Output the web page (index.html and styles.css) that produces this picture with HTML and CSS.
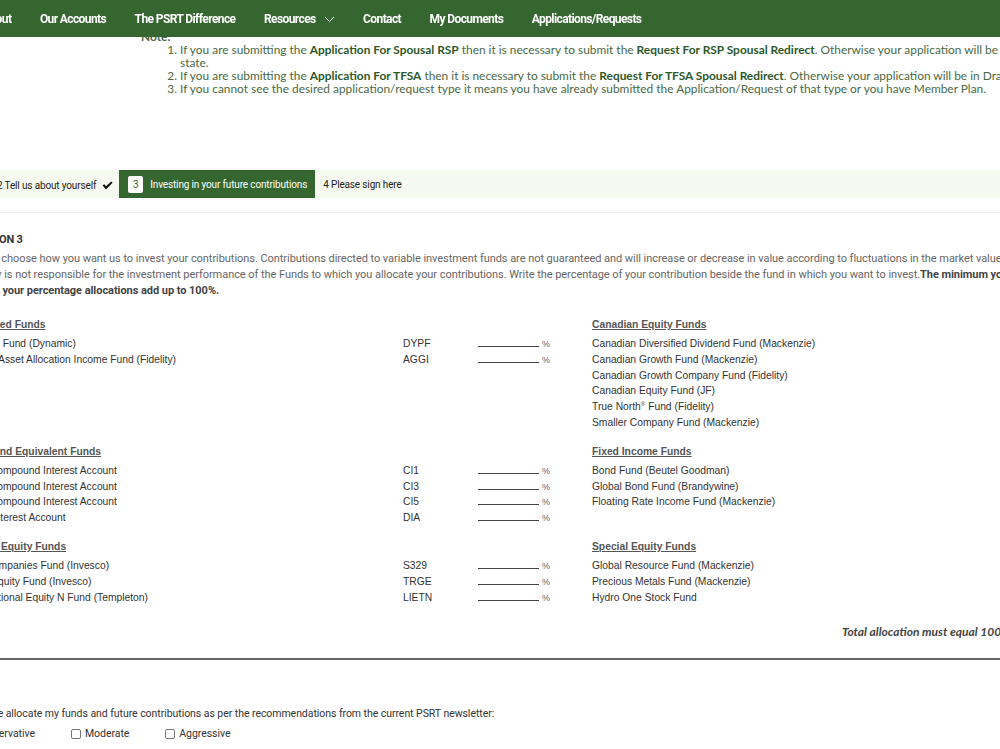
FILE: index.html
```html
<!DOCTYPE html>
<html lang="en">
<head>
<meta charset="utf-8">
<title>Applications/Requests – Investing in your future contributions</title>
<link rel="stylesheet" href="styles.css">
</head>
<body>
<header class="topnav">
  <nav class="topnav-inner">
    <a class="nav-link">About</a>
    <a class="nav-link">Our Accounts</a>
    <a class="nav-link">The PSRT Difference</a>
    <a class="nav-link has-menu">Resources
      <svg class="chev" width="11" height="7" viewBox="0 0 11 7"><polyline points="1,1 5.5,5.5 10,1" fill="none" stroke="#fff" stroke-width="1"/></svg>
    </a>
    <a class="nav-link">Contact</a>
    <a class="nav-link">My Documents</a>
    <a class="nav-link">Applications/Requests</a>
  </nav>
</header>

<main class="page">
  <section class="note">
    <div class="note-title">Note:</div>
    <ol class="note-list">
      <li>If you are submitting the <b>Application For Spousal RSP</b> then it is necessary to submit the <b>Request For RSP Spousal Redirect</b>. Otherwise your application will be in Draft<br>state.</li>
      <li>If you are submitting the <b>Application For TFSA</b> then it is necessary to submit the <b>Request For TFSA Spousal Redirect</b>. Otherwise your application will be in Draft state.</li>
      <li>If you cannot see the desired application/request type it means you have already submitted the Application/Request of that type or you have Member Plan.</li>
    </ol>
  </section>

  <div class="steps">
    <div class="step step-done">
      <span>2 Tell us about yourself</span>
      <svg class="check" width="11" height="9" viewBox="0 0 11 9"><path d="M0.6 4.6 L2.2 3.2 L4 5.2 L9.2 0.4 L10.6 1.8 L4 8.4 Z" fill="#111"/></svg>
    </div>
    <div class="step step-active">
      <span class="step-num">3</span>
      <span>Investing in your future contributions</span>
    </div>
    <div class="step step-next">4 Please sign here</div>
  </div>
  <div class="rule-light"></div>

  <section class="section3">
    <h2 class="sec-title">SECTION 3</h2>
    <p class="sec-intro">Please choose how you want us to invest your contributions. Contributions directed to variable investment funds are not guaranteed and will increase or decrease in value according to fluctuations in the market value of the assets. The<br>Society is not responsible for the investment performance of the Funds to which you allocate your contributions. Write the percentage of your contribution beside the fund in which you want to invest.<b>The minimum you can allocate to a fund is 5%.</b><br><b>Ensure your percentage allocations add up to 100%.</b></p>

    <div class="funds">
      <div class="fund-group">
        <div class="fund-head">Balanced Funds</div>
        <div class="fund-row"><span class="fund-name">Income Fund (Dynamic)</span><span class="fund-code">DYPF</span><span class="blank"></span><span class="pct">%</span></div>
        <div class="fund-row"><span class="fund-name">Global Asset Allocation Income Fund (Fidelity)</span><span class="fund-code">AGGI</span><span class="blank"></span><span class="pct">%</span></div>
      </div>
      <div class="fund-group">
        <div class="fund-head">Canadian Equity Funds</div>
        <div class="fund-row"><span class="fund-name">Canadian Diversified Dividend Fund (Mackenzie)</span></div>
        <div class="fund-row"><span class="fund-name">Canadian Growth Fund (Mackenzie)</span></div>
        <div class="fund-row"><span class="fund-name">Canadian Growth Company Fund (Fidelity)</span></div>
        <div class="fund-row"><span class="fund-name">Canadian Equity Fund (JF)</span></div>
        <div class="fund-row"><span class="fund-name">True North<sup>®</sup> Fund (Fidelity)</span></div>
        <div class="fund-row"><span class="fund-name">Smaller Company Fund (Mackenzie)</span></div>
      </div>

      <div class="fund-group">
        <div class="fund-head">Cash and Equivalent Funds</div>
        <div class="fund-row"><span class="fund-name">1 Yr. Compound Interest Account</span><span class="fund-code">CI1</span><span class="blank"></span><span class="pct">%</span></div>
        <div class="fund-row"><span class="fund-name">3 Yr. Compound Interest Account</span><span class="fund-code">CI3</span><span class="blank"></span><span class="pct">%</span></div>
        <div class="fund-row"><span class="fund-name">5 Yr. Compound Interest Account</span><span class="fund-code">CI5</span><span class="blank"></span><span class="pct">%</span></div>
        <div class="fund-row"><span class="fund-name">Daily Interest Account</span><span class="fund-code">DIA</span><span class="blank"></span><span class="pct">%</span></div>
      </div>
      <div class="fund-group">
        <div class="fund-head">Fixed Income Funds</div>
        <div class="fund-row"><span class="fund-name">Bond Fund (Beutel Goodman)</span></div>
        <div class="fund-row"><span class="fund-name">Global Bond Fund (Brandywine)</span></div>
        <div class="fund-row"><span class="fund-name">Floating Rate Income Fund (Mackenzie)</span></div>
      </div>

      <div class="fund-group">
        <div class="fund-head">Global Equity Funds</div>
        <div class="fund-row"><span class="fund-name">Mid Companies Fund (Invesco)</span><span class="fund-code">S329</span><span class="blank"></span><span class="pct">%</span></div>
        <div class="fund-row"><span class="fund-name">Core Equity Fund (Invesco)</span><span class="fund-code">TRGE</span><span class="blank"></span><span class="pct">%</span></div>
        <div class="fund-row"><span class="fund-name">International Equity N Fund (Templeton)</span><span class="fund-code">LIETN</span><span class="blank"></span><span class="pct">%</span></div>
      </div>
      <div class="fund-group">
        <div class="fund-head">Special Equity Funds</div>
        <div class="fund-row"><span class="fund-name">Global Resource Fund (Mackenzie)</span></div>
        <div class="fund-row"><span class="fund-name">Precious Metals Fund (Mackenzie)</span></div>
        <div class="fund-row"><span class="fund-name">Hydro One Stock Fund</span></div>
      </div>

      <div class="total-cell"></div>
      <div class="total-cell"><span class="total">Total allocation must equal 100%</span></div>
    </div>
  </section>

  <div class="rule-dark"></div>

  <section class="recommend">
    <p class="rec-text">Please allocate my funds and future contributions as per the recommendations from the current PSRT newsletter:</p>
    <div class="options">
      <label class="opt"><span class="box"></span>Conservative</label>
      <label class="opt"><span class="box"></span>Moderate</label>
      <label class="opt"><span class="box"></span>Aggressive</label>
    </div>
  </section>
</main>
</body>
</html>
```

FILE: styles.css
```css
html, body {
  margin: 0;
  padding: 0;
}
html {
  overflow: hidden;
}
body {
  width: 1000px;
  height: 749px;
  overflow: hidden;
  background: #ffffff;
  color: #333333;
  font-family: "Liberation Sans", Arial, sans-serif;
}

/* ---------- top navigation ---------- */
.topnav {
  position: fixed;
  top: 0;
  left: 0;
  right: 0;
  height: 37px;
  background: #356630;
  z-index: 10;
}
.topnav-inner {
  display: flex;
  align-items: center;
  height: 37px;
  margin-left: -18px;
  gap: 28.5px;
  font-family: Roboto, "Liberation Sans", sans-serif;
  font-weight: 700;
  font-size: 12px;
  letter-spacing: -0.6px;
  color: #ffffff;
  white-space: nowrap;
}
.nav-link {
  display: flex;
  align-items: center;
  gap: 8px;
}
.chev {
  display: block;
  margin-top: 1px;
}

/* ---------- page ---------- */
.page {
  margin-left: -34px;
  width: 1300px;
  padding-top: 30px;
}

.note {
  padding-left: 175px;
  font-family: Lato, "Liberation Sans", sans-serif;
  font-size: 11.9px;
  line-height: 13px;
  color: #4a6944;
}
.note-title {
  font-weight: 700;
}
.note-list {
  margin: 0;
  padding-left: 39px;
  white-space: nowrap;
}
.note-list b {
  font-weight: 700;
  color: #2d582a;
}

/* ---------- steps ---------- */
.steps {
  margin-top: 75px;
  height: 28px;
  background: #f6f9ef;
  display: flex;
  align-items: center;
  padding-left: 31px;
  font-family: Roboto, "Liberation Sans", sans-serif;
  font-size: 10px;
  letter-spacing: -0.15px;
  color: #222222;
  white-space: nowrap;
}
.step {
  display: flex;
  align-items: center;
}
.step-done {
  gap: 6px;
  padding-top: 3px;
}
.check {
  display: block;
}
.step-active {
  margin-left: 6px;
  height: 28px;
  padding: 0 8px 0 9px;
  gap: 7px;
  background: #356630;
  color: #ffffff;
}
.step-num {
  width: 15px;
  height: 17px;
  border-radius: 2px;
  background: #ffffff;
  color: #356630;
  display: flex;
  align-items: center;
  justify-content: center;
}
.step-next {
  margin-left: 8px;
}
.rule-light {
  margin-top: 14px;
  border-top: 1px solid #ececec;
}

/* ---------- section 3 ---------- */
.section3 {
  font-family: Roboto, "Liberation Sans", sans-serif;
}
.sec-title {
  margin: 19px 0 0 4px;
  font-size: 11px;
  line-height: 16px;
  font-weight: 700;
  letter-spacing: -0.2px;
  color: #333333;
}
.sec-intro {
  margin: 3px 0 0 0;
  font-size: 11px;
  line-height: 16px;
  letter-spacing: -0.05px;
  color: #666666;
  white-space: nowrap;
}
.sec-intro b {
  color: #444444;
}

.funds {
  margin-top: 18px;
  display: grid;
  grid-template-columns: 626px 626px;
  row-gap: 13px;
  align-items: start;
  font-family: "Liberation Sans", Arial, sans-serif;
  font-size: 10.3px;
  color: #333333;
}
.fund-head {
  font-weight: 700;
  text-decoration: underline;
  color: #555555;
  line-height: 16px;
  margin-bottom: 3px;
}
.fund-row {
  display: flex;
  align-items: baseline;
  height: 15.8px;
  line-height: 15.8px;
  white-space: nowrap;
}
.fund-name {
  width: 437px;
}
.fund-name sup {
  font-size: 6px;
  line-height: 0;
}
.fund-code {
  width: 75px;
}
.blank {
  display: inline-block;
  width: 61px;
  height: 1px;
  border-bottom: 1px solid #444444;
  margin-right: 3px;
}
.pct {
  font-size: 9px;
  color: #666666;
}
.total-cell {
  padding-top: 6px;
}
.total {
  display: block;
  padding-left: 250px;
  font-family: Lato, "Liberation Sans", sans-serif;
  font-weight: 700;
  font-style: italic;
  font-size: 12px;
  line-height: 16px;
  color: #444444;
  white-space: nowrap;
}

.rule-dark {
  margin-top: 18px;
  border-top: 2px solid #666666;
}

/* ---------- recommendation ---------- */
.recommend {
  font-family: Roboto, "Liberation Sans", sans-serif;
  font-size: 10.5px;
  letter-spacing: -0.05px;
  color: #333333;
}
.rec-text {
  margin: 46px 0 0 6px;
  line-height: 16px;
  white-space: nowrap;
}
.options {
  margin: 4px 0 0 -5px;
  display: flex;
  gap: 36px;
  line-height: 16px;
}
.opt {
  display: flex;
  align-items: center;
  gap: 4px;
}
.box {
  display: inline-block;
  width: 8px;
  height: 8px;
  border: 1px solid #777777;
  border-radius: 2px;
  background: #ffffff;
}
```
